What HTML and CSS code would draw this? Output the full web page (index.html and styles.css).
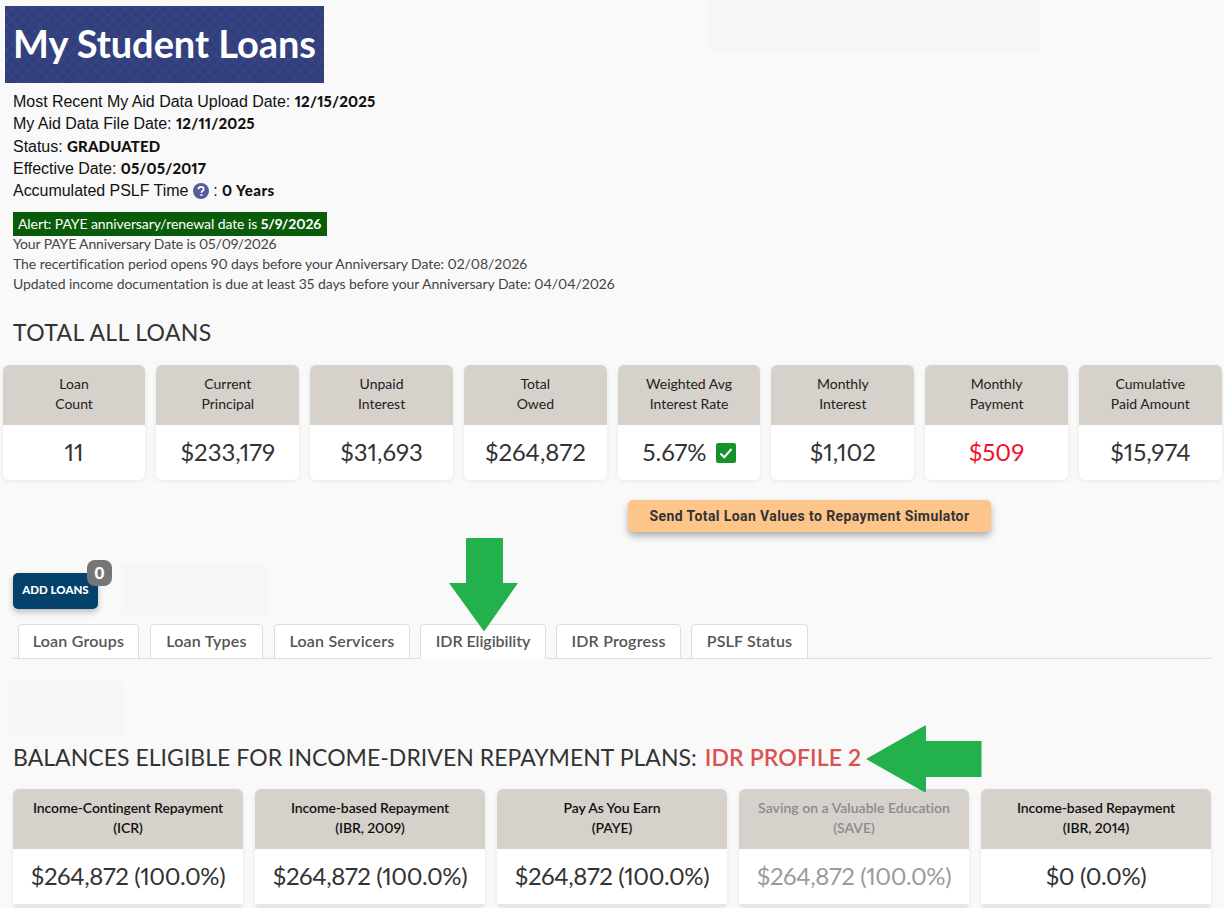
FILE: index.html
```html
<!DOCTYPE html>
<html lang="en">
<head>
<meta charset="utf-8">
<title>My Student Loans</title>
<link rel="stylesheet" href="styles.css">
</head>
<body>
<div class="page">
  <div class="smudge smudge-top"></div>
  <div class="smudge smudge-mid"></div>
  <div class="smudge smudge-low"></div>

  <h1 class="banner">My Student Loans</h1>

  <div class="facts">
    <div>Most Recent My Aid Data Upload Date: <b>12/15/2025</b></div>
    <div>My Aid Data File Date: <b>12/11/2025</b></div>
    <div>Status: <b>GRADUATED</b></div>
    <div>Effective Date: <b>05/05/2017</b></div>
    <div class="fact-help">Accumulated PSLF Time
      <svg class="help" viewBox="0 0 16 16" aria-hidden="true"><circle cx="8" cy="8" r="8" fill="#565c9c"/><path d="M5.4 6.2C5.5 4.6 6.6 3.8 8.1 3.8c1.500 0 2.600.9 2.600 2.200 0 1-.6 1.500-1.300 2-.6.4-.9.7-.9 1.400v.3" fill="none" stroke="#fff" stroke-width="1.700"/><circle cx="8.400" cy="12" r="1.100" fill="#fff"/></svg>
      : <b>0 Years</b></div>
  </div>

  <div class="alert">Alert: PAYE anniversary/renewal date is <span class="alert-date">5/9/2026</span></div>
  <div class="notes">
    <div>Your PAYE Anniversary Date is 05/09/2026</div>
    <div>The recertification period opens 90 days before your Anniversary Date: 02/08/2026</div>
    <div>Updated income documentation is due at least 35 days before your Anniversary Date: 04/04/2026</div>
  </div>

  <h2 class="heading heading-total">TOTAL ALL LOANS</h2>

  <div class="stats">
    <div class="card"><div class="card-head">Loan<br>Count</div><div class="card-value">11</div></div>
    <div class="card"><div class="card-head">Current<br>Principal</div><div class="card-value">$233,179</div></div>
    <div class="card"><div class="card-head">Unpaid<br>Interest</div><div class="card-value">$31,693</div></div>
    <div class="card"><div class="card-head">Total<br>Owed</div><div class="card-value">$264,872</div></div>
    <div class="card"><div class="card-head">Weighted Avg<br>Interest Rate</div><div class="card-value">5.67%
      <svg class="check" viewBox="0 0 20 20" aria-hidden="true"><rect width="20" height="20" rx="2" fill="#18912a"/><path d="M4.500 10.500l3.700 3.700 7.300-8.200" fill="none" stroke="#fff" stroke-width="2"/></svg></div></div>
    <div class="card"><div class="card-head">Monthly<br>Interest</div><div class="card-value">$1,102</div></div>
    <div class="card"><div class="card-head">Monthly<br>Payment</div><div class="card-value card-value-red">$509</div></div>
    <div class="card"><div class="card-head">Cumulative<br>Paid Amount</div><div class="card-value">$15,974</div></div>
  </div>

  <div class="send-row"><button class="send" type="button">Send Total Loan Values to Repayment Simulator</button></div>

  <div class="add-row">
    <button class="add" type="button">ADD LOANS<span class="badge">0</span></button>
  </div>

  <div class="tabs">
    <div class="tab tab-groups">Loan Groups</div>
    <div class="tab tab-types">Loan Types</div>
    <div class="tab tab-servicers">Loan Servicers</div>
    <div class="tab tab-active">IDR Eligibility</div>
    <div class="tab tab-progress">IDR Progress</div>
    <div class="tab tab-pslf">PSLF Status</div>
  </div>

  <h2 class="heading heading-idr">BALANCES ELIGIBLE FOR INCOME-DRIVEN REPAYMENT PLANS: <span class="profile">IDR PROFILE 2</span></h2>

  <div class="plans">
    <div class="card plan"><div class="card-head">Income-Contingent Repayment<br>(ICR)</div><div class="card-value">$264,872 (100.0%)</div></div>
    <div class="card plan"><div class="card-head">Income-based Repayment<br>(IBR, 2009)</div><div class="card-value">$264,872 (100.0%)</div></div>
    <div class="card plan"><div class="card-head">Pay As You Earn<br>(PAYE)</div><div class="card-value">$264,872 (100.0%)</div></div>
    <div class="card plan plan-muted"><div class="card-head">Saving on a Valuable Education<br>(SAVE)</div><div class="card-value">$264,872 (100.0%)</div></div>
    <div class="card plan"><div class="card-head">Income-based Repayment<br>(IBR, 2014)</div><div class="card-value">$0 (0.0%)</div></div>
  </div>

  <svg class="arrow arrow-down" viewBox="0 0 70 95" aria-hidden="true"><path d="M18 1h35a1 1 0 0 1 1 1v44h15l-34 48.500L0 46h17V2a1 1 0 0 1 1-1z" fill="#22b14c"/></svg>
  <svg class="arrow arrow-left" viewBox="0 0 116 67" aria-hidden="true"><path d="M0 34L59 0.500l1 .5v15h55.500v36H60v15l-1 .5z" fill="#22b14c"/></svg>
</div>
</body>
</html>
```
FILE: styles.css
```css
* { box-sizing: border-box; }
html, body { margin: 0; padding: 0; background: #f9f9f9; }
body { font-family: "Lato", "Liberation Sans", sans-serif; color: #333; font-variant-numeric: proportional-nums; }
.page { position: relative; width: 1224px; height: 908px; overflow: hidden; padding-top: 6px; }

.banner {
  width: 319px; height: 77px; margin: 0 0 0 5px; padding: 0 0 4px 8px;
  display: flex; align-items: center;
  font-size: 38px; font-weight: 700; color: #fff; white-space: nowrap; letter-spacing: -.05px;
  background-color: #323f7d;
  background-image:
    repeating-linear-gradient(45deg, rgba(255,255,255,.018) 0 2px, transparent 2px 8px),
    repeating-linear-gradient(-45deg, rgba(255,255,255,.018) 0 2px, transparent 2px 8px);
}

.facts {
  margin: 8px 0 0 13px;
  font-family: "Liberation Sans", Arial, sans-serif; font-size: 16px; line-height: 22.3px; color: #111; letter-spacing: -.03px;
}
.facts b { font-family: "Lato", "Liberation Sans", sans-serif; font-size: 15px; line-height: 1; font-weight: 900; color: #111; letter-spacing: .15px; }
.facts .fact-help b { letter-spacing: .5px; }
.help { width: 16px; height: 16px; vertical-align: -3px; }

.alert {
  width: 314px; height: 24px; margin: 10px 0 0 13px; padding-left: 5px;
  background: #0a5c0a; color: #fff; font-size: 14px; line-height: 24px; white-space: nowrap; letter-spacing: -.08px;
}
.alert-date { font-weight: 700; }
.notes { margin-left: 13px; font-size: 14px; line-height: 20px; color: #444; white-space: nowrap; letter-spacing: -.06px; }
.notes div:first-child { margin-top: -2px; letter-spacing: -.14px; }

.heading { margin: 0 0 0 13px; font-size: 23px; font-weight: 400; color: #333; white-space: nowrap; }
.heading-total { margin-top: 23px; line-height: 30px; letter-spacing: .35px; }
.heading-idr { margin-top: 83px; line-height: 30px; letter-spacing: .03px; }
.profile { color: #d9534f; font-weight: 600; margin-left: 2px; letter-spacing: .12px; }

.stats {
  display: grid; grid-template-columns: repeat(8, 142.75px); column-gap: 11px;
  margin: 18px 0 0 2.7px;
}
.card { background: #fff; border-radius: 6px; overflow: hidden; box-shadow: 0 1px 5px rgba(0,0,0,.07); text-align: center; }
.card-head { height: 60px; padding-top: 9px; background: #d6d1cb; color: #222; font-size: 14px; line-height: 20px; }
.card-value { height: 55px; font-size: 24px; line-height: 54px; color: #333; white-space: nowrap; }
.card-value-red { color: #f5102a; }
.check { width: 20px; height: 20px; vertical-align: -2px; margin-left: 3px; }

.send-row { margin: 20px 0 0 628px; }
.send {
  display: block; width: 363px; height: 32px; padding: 0; border: 0; border-radius: 5px;
  background: #fdc58a; color: #333; cursor: pointer;
  font-family: "Roboto", "Liberation Sans", sans-serif; font-size: 14px; font-weight: 700; letter-spacing: .4px;
  box-shadow: 0 4px 7px rgba(0,0,0,.3);
}

.add-row { margin: 41px 0 0 13px; height: 36px; }
.add {
  position: relative; display: block; width: 85px; height: 36px; padding: 0 0 3px; border: 0; border-radius: 5px;
  background: #04426b; color: #fff; cursor: pointer;
  font-family: "Lato", "Liberation Sans", sans-serif; font-size: 11.5px; font-weight: 900;
  box-shadow: 0 3px 6px rgba(0,0,0,.25);
}
.badge {
  position: absolute; left: 74px; top: -13px; width: 25px; height: 26px; border-radius: 8px;
  background: #767676; color: #fff; font-size: 17px; font-weight: 900; line-height: 26px; text-align: center;
}

.tabs {
  display: flex; height: 35px; margin: 15px 12px 0 13px; padding-left: 5px;
  border-bottom: 1px solid #ddd; gap: 11px;
}
.tab {
  height: 35px; border: 1px solid #ddd; border-radius: 4px 4px 0 0; background: #fff;
  font-size: 16px; font-weight: 600; line-height: 32px; color: #555; text-align: center; white-space: nowrap; letter-spacing: .2px;
}
.tab-groups { width: 121px; }
.tab-types { width: 113px; }
.tab-servicers { width: 136px; margin-right: -1px; }
.tab-active { width: 126px; margin-right: -1px; border-bottom-color: #fff; letter-spacing: -.05px; }
.tab-progress { width: 125px; }
.tab-pslf { width: 117px; margin-left: -1px; }

.plans {
  display: grid; grid-template-columns: repeat(5, 230px); column-gap: 12px;
  margin: 17px 0 0 13px;
}
.plan { height: 119px; box-shadow: 0 1px 5px rgba(0,0,0,.07); }
.plan .card-head { color: #111; font-weight: 600; letter-spacing: -.1px; }
.plan .card-value { border-bottom: 4px solid #e0e8ee; height: 59px; letter-spacing: -.4px; }
.plan-muted .card-head { color: #8b8b8b; letter-spacing: .03px; }
.plan-muted .card-value { color: #9b9b9b; }

.arrow { position: absolute; z-index: 3; }
.arrow-down { left: 449px; top: 537px; width: 70px; height: 95px; }
.arrow-left { left: 866px; top: 725px; width: 116px; height: 67px; }

.smudge { position: absolute; background: #f6f6f6; filter: blur(1px); }
.smudge-top { left: 708px; top: -4px; width: 332px; height: 56px; }
.smudge-mid { left: 122px; top: 564px; width: 145px; height: 52px; }
.smudge-low { left: 9px; top: 681px; width: 113px; height: 56px; }
```
